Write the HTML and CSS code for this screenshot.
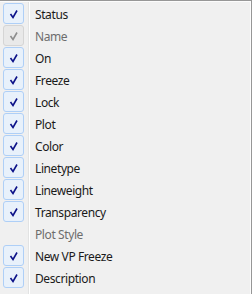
FILE: index.html
```html
<!DOCTYPE html>
<html lang="en">
<head>
    <meta charset="UTF-8">
    <title>Layer Columns</title>
    <link rel="stylesheet" href="styles.css">
</head>
<body>
    <div class="menu">
        <div class="item"><span class="check"><svg viewBox="0 0 19 19"><polyline points="6.5,10 9,13.5 13,6.5"/></svg></span><span class="label">Status</span></div>
        <div class="item disabled"><span class="check"><svg viewBox="0 0 19 19"><polyline points="6.5,10 9,13.5 13,6.5"/></svg></span><span class="label">Name</span></div>
        <div class="item"><span class="check"><svg viewBox="0 0 19 19"><polyline points="6.5,10 9,13.5 13,6.5"/></svg></span><span class="label">On</span></div>
        <div class="item"><span class="check"><svg viewBox="0 0 19 19"><polyline points="6.5,10 9,13.5 13,6.5"/></svg></span><span class="label">Freeze</span></div>
        <div class="item"><span class="check"><svg viewBox="0 0 19 19"><polyline points="6.5,10 9,13.5 13,6.5"/></svg></span><span class="label">Lock</span></div>
        <div class="item"><span class="check"><svg viewBox="0 0 19 19"><polyline points="6.5,10 9,13.5 13,6.5"/></svg></span><span class="label">Plot</span></div>
        <div class="item"><span class="check"><svg viewBox="0 0 19 19"><polyline points="6.5,10 9,13.5 13,6.5"/></svg></span><span class="label">Color</span></div>
        <div class="item"><span class="check"><svg viewBox="0 0 19 19"><polyline points="6.5,10 9,13.5 13,6.5"/></svg></span><span class="label">Linetype</span></div>
        <div class="item"><span class="check"><svg viewBox="0 0 19 19"><polyline points="6.5,10 9,13.5 13,6.5"/></svg></span><span class="label">Lineweight</span></div>
        <div class="item"><span class="check"><svg viewBox="0 0 19 19"><polyline points="6.5,10 9,13.5 13,6.5"/></svg></span><span class="label">Transparency</span></div>
        <div class="item disabled"><span class="nocheck"></span><span class="label">Plot Style</span></div>
        <div class="item"><span class="check"><svg viewBox="0 0 19 19"><polyline points="6.5,10 9,13.5 13,6.5"/></svg></span><span class="label">New VP Freeze</span></div>
        <div class="item"><span class="check"><svg viewBox="0 0 19 19"><polyline points="6.5,10 9,13.5 13,6.5"/></svg></span><span class="label">Description</span></div>
    </div>
</body>
</html>
```

FILE: styles.css
```css
body {
    margin: 0;
    background-color: #f0f0f0;
    font-family: "Noto Sans", "Open Sans", sans-serif;
    font-size: 12px;
}
.menu {
    box-sizing: border-box;
    width: 252px;
    height: 294px;
    padding: 2px 3px 0 2px;
    border-top: 1px solid #979797;
    border-right: 1px solid #979797;
    box-shadow: inset -1px 1px 0 #fcfcfc;
    background-color: #f0f0f0;
    background-image: linear-gradient(to right, transparent 28px, #e2e3e3 28px, #e2e3e3 29px, #ffffff 29px, #ffffff 30px, transparent 30px);
}
.item {
    display: flex;
    align-items: center;
    height: 22px;
    color: #1a1a1a;
}
.check, .nocheck {
    box-sizing: border-box;
    flex: none;
    width: 21px;
    height: 21px;
    margin-left: 1px;
    margin-bottom: 1px;
}
.check {
    border: 1px solid #aecff7;
    border-radius: 3px;
    background-color: #e8f1fb;
}
.check svg {
    display: block;
    width: 19px;
    height: 19px;
}
.check polyline {
    fill: none;
    stroke: #0c1289;
    stroke-width: 1.6;
}
.label {
    margin-left: 11px;
    letter-spacing: -0.4px;
}
.disabled {
    color: #6d6d6d;
}
.disabled .check {
    border-color: #d5d5d5;
    background-color: #e9e9e9;
}
.disabled .check polyline {
    stroke: #8d8d8d;
}
```
